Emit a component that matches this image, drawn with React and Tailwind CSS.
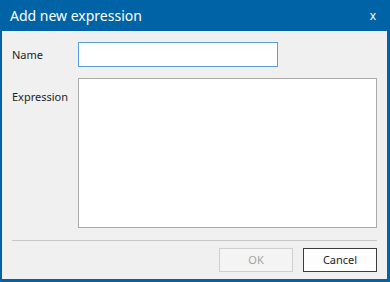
import React from "react";

export default function App() {
  return (
    <div className="w-[390px] h-[282px] bg-[#0063a6] flex flex-col font-['Noto_Sans',sans-serif]">
      {/* title bar */}
      <div className="h-[31px] flex items-center justify-between pl-[10px] pr-[14px] text-white text-[14px]">
        <span>Add new expression</span>
        <span className="text-[12px]">x</span>
      </div>

      {/* dialog body */}
      <div className="flex-1 ml-[2px] mr-[3px] mb-[3px] bg-[#f0f0f0] flex flex-col pt-[11px] px-[10px] text-[11px] text-[#1e1e1e]">
        <div className="flex items-center h-[25px]">
          <span className="w-[66px] pt-[2px]">Name</span>
          <input
            type="text"
            className="w-[200px] h-[25px] bg-white border border-[#5a9de3] outline-none"
          />
        </div>
        <div className="flex mt-[11px]">
          <span className="w-[66px] pt-[11px]">Expression</span>
          <textarea className="flex-1 h-[150px] bg-white border border-[#ababab] outline-none resize-none" />
        </div>
        <div className="mt-[12px] h-px bg-[#c8c8c8]" />
        <div className="flex justify-end gap-[10px] mt-[7px]">
          <button
            disabled
            className="w-[74px] h-[24px] bg-[#f4f4f4] border border-[#cfcfcf] text-[#a3a3a3]"
          >
            OK
          </button>
          <button className="w-[74px] h-[24px] bg-[#fdfdfd] border border-[#3c3c3c] text-[#1e1e1e]">
            Cancel
          </button>
        </div>
      </div>
    </div>
  );
}
